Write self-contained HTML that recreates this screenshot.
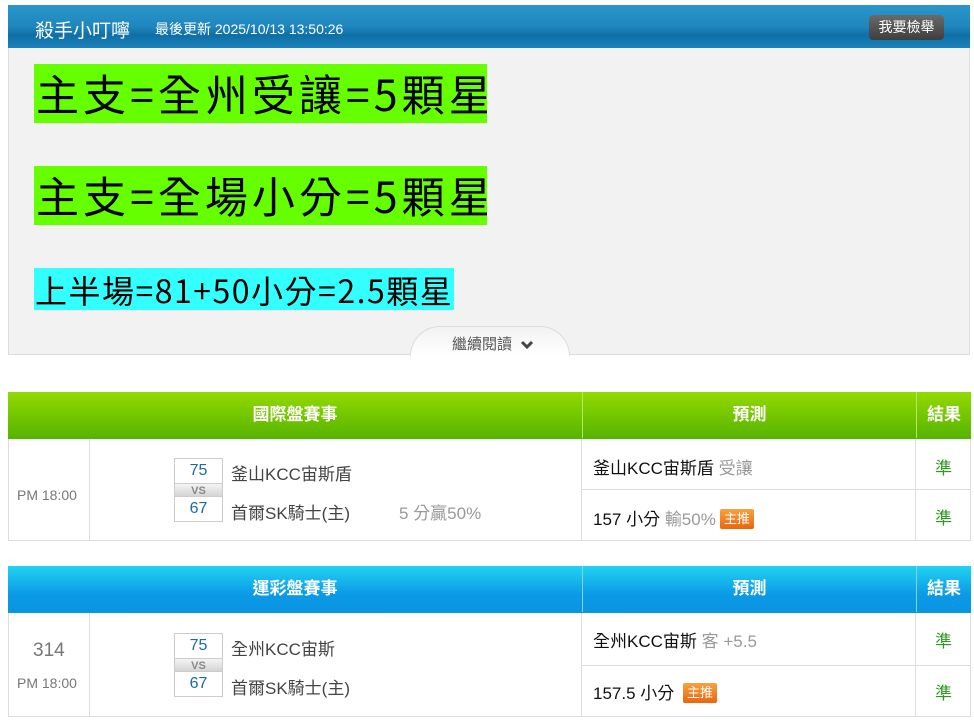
<!DOCTYPE html>
<html><head><meta charset="utf-8"><style>
*{margin:0;padding:0;box-sizing:border-box}
body{width:974px;height:721px;background:#fff;font-family:"Liberation Sans","Noto Sans CJK TC",sans-serif;position:relative;overflow:hidden}
.a{position:absolute}
.hdr{left:8px;top:5px;width:962px;height:43px;background:linear-gradient(#2a97cc,#1f86bd 50%,#0f6fa6 70%,#1a82bb);}
.panel{left:8px;top:48px;width:962px;height:307px;background:#f2f2f2;border:1px solid #ddd;border-top:none}
.hl{font-family:"Noto Sans CJK TC",sans-serif;color:#000;line-height:1;white-space:nowrap;overflow:hidden}
.tb{border:1px solid #ddd}
.th{color:#fff;font-weight:bold;font-size:17px;text-align:center;line-height:46px}
.box{border:1px solid #ccc;width:49px;background:#fff}
.sc{color:#1b6aa5;font-size:16px;text-align:center;height:24px;line-height:24px}
.vs{height:14px;line-height:14px;font-size:11px;font-weight:bold;color:#888;text-align:center;background:linear-gradient(#f4f4f4,#d4d4d4);border-top:1px solid #ccc;border-bottom:1px solid #ccc}
.t{font-size:17px;color:#444;white-space:nowrap}
.g{color:#999}
.tag{display:inline-block;background:linear-gradient(#f9a13e,#e8660e);color:#fff;font-size:13px;padding:0 4px;height:20px;line-height:20px;border-radius:2px;vertical-align:2px;margin-left:4px}
.ok{color:#2d9a1d;font-size:17px;text-align:center;width:55px}
</style></head><body>
<div class="a hdr"></div>
<div class="a" style="left:35px;top:16px;color:#fff;font-size:19px">殺手小叮嚀</div>
<div class="a" style="left:155px;top:19px;color:#fff;font-size:14px">最後更新 2025/10/13 13:50:26</div>
<div class="a" style="left:869px;top:15px;width:75px;height:25px;border-radius:4px;background:linear-gradient(#6a6a6a,#3e3e3e);color:#fff;font-size:14px;text-align:center;line-height:25px">我要檢舉</div>
<div class="a panel"></div>
<div class="a hl" style="left:34px;top:64px;width:453px;height:59px;background:#66ff00;font-size:43px;line-height:59px;padding-left:2px;letter-spacing:4px">主支=全州受讓=5顆星</div>
<div class="a hl" style="left:34px;top:166px;width:453px;height:59px;background:#66ff00;font-size:43px;line-height:59px;padding-left:2px;letter-spacing:4px">主支=全場小分=5顆星</div>
<div class="a hl" style="left:34px;top:268px;width:420px;height:42px;background:#33ffff;font-size:32px;line-height:44px;padding-left:1px;letter-spacing:1.5px">上半場=81+50小分=2.5顆星</div>
<div class="a" style="left:410px;top:326px;width:160px;height:30px;background:linear-gradient(#f2f2f2,#fff);border:1px solid #ddd;border-bottom:none;border-radius:30px 30px 0 0"></div>
<div class="a" style="left:452px;top:333px;color:#555;font-size:15px">繼續閱讀</div>
<div class="a" style="left:520px;top:337px"><svg width="14" height="10" viewBox="0 0 14 10"><path d="M2 2 L7 7 L12 2" stroke="#444" stroke-width="3" fill="none"/></svg></div>

<!-- table 1 -->
<div class="a tb" style="left:8px;top:392px;width:963px;height:149px"></div>
<div class="a" style="left:8px;top:392px;width:963px;height:47px;background:linear-gradient(#93da00,#55b300)"></div>
<div class="a th" style="left:8px;top:392px;width:574px">國際盤賽事</div>
<div class="a th" style="left:582px;top:392px;width:334px;border-left:1px solid #b5e86a">預測</div>
<div class="a th" style="left:916px;top:392px;width:55px;border-left:1px solid #b5e86a">結果</div>
<div class="a" style="left:89px;top:439px;width:1px;height:101px;background:#ddd"></div>
<div class="a" style="left:581px;top:439px;width:1px;height:101px;background:#ddd"></div>
<div class="a" style="left:915px;top:439px;width:1px;height:101px;background:#ddd"></div>
<div class="a" style="left:582px;top:489px;width:388px;height:1px;background:#ddd"></div>
<div class="a" style="left:17px;top:487px;font-size:14px;color:#777">PM 18:00</div>
<div class="a box" style="left:174px;top:458px"><div class="sc">75</div><div class="vs">VS</div><div class="sc">67</div></div>
<div class="a t" style="left:231px;top:460px">釜山KCC宙斯盾</div>
<div class="a t" style="left:231px;top:499px">首爾SK騎士(主)</div>
<div class="a t g" style="left:399px;top:499px">5 分贏50%</div>
<div class="a t" style="left:593px;top:454px;color:#111">釜山KCC宙斯盾 <span class="g">受讓</span></div>
<div class="a t" style="left:593px;top:505px;color:#111">157 小分 <span class="g">輸50%</span><span class="tag">主推</span></div>
<div class="a ok" style="left:916px;top:454px">準</div>
<div class="a ok" style="left:916px;top:504px">準</div>

<!-- table 2 -->
<div class="a tb" style="left:8px;top:566px;width:963px;height:151px"></div>
<div class="a" style="left:8px;top:566px;width:963px;height:47px;background:linear-gradient(#22d3f2,#0b9ae6 60%,#0a94e2)"></div>
<div class="a th" style="left:8px;top:566px;width:574px">運彩盤賽事</div>
<div class="a th" style="left:582px;top:566px;width:334px;border-left:1px solid #7fd4f4">預測</div>
<div class="a th" style="left:916px;top:566px;width:55px;border-left:1px solid #7fd4f4">結果</div>
<div class="a" style="left:89px;top:613px;width:1px;height:103px;background:#ddd"></div>
<div class="a" style="left:581px;top:613px;width:1px;height:103px;background:#ddd"></div>
<div class="a" style="left:915px;top:613px;width:1px;height:103px;background:#ddd"></div>
<div class="a" style="left:582px;top:665px;width:388px;height:1px;background:#ddd"></div>
<div class="a" style="left:33px;top:640px;font-size:19px;color:#777">314</div>
<div class="a" style="left:17px;top:675px;font-size:14px;color:#777">PM 18:00</div>
<div class="a box" style="left:174px;top:633px"><div class="sc">75</div><div class="vs">VS</div><div class="sc">67</div></div>
<div class="a t" style="left:231px;top:635px">全州KCC宙斯</div>
<div class="a t" style="left:231px;top:674px">首爾SK騎士(主)</div>
<div class="a t" style="left:593px;top:627px;color:#111">全州KCC宙斯 <span class="g">客 +5.5</span></div>
<div class="a t" style="left:593px;top:679px;color:#111">157.5 小分 <span class="tag">主推</span></div>
<div class="a ok" style="left:916px;top:627px">準</div>
<div class="a ok" style="left:916px;top:679px">準</div>
</body></html>
